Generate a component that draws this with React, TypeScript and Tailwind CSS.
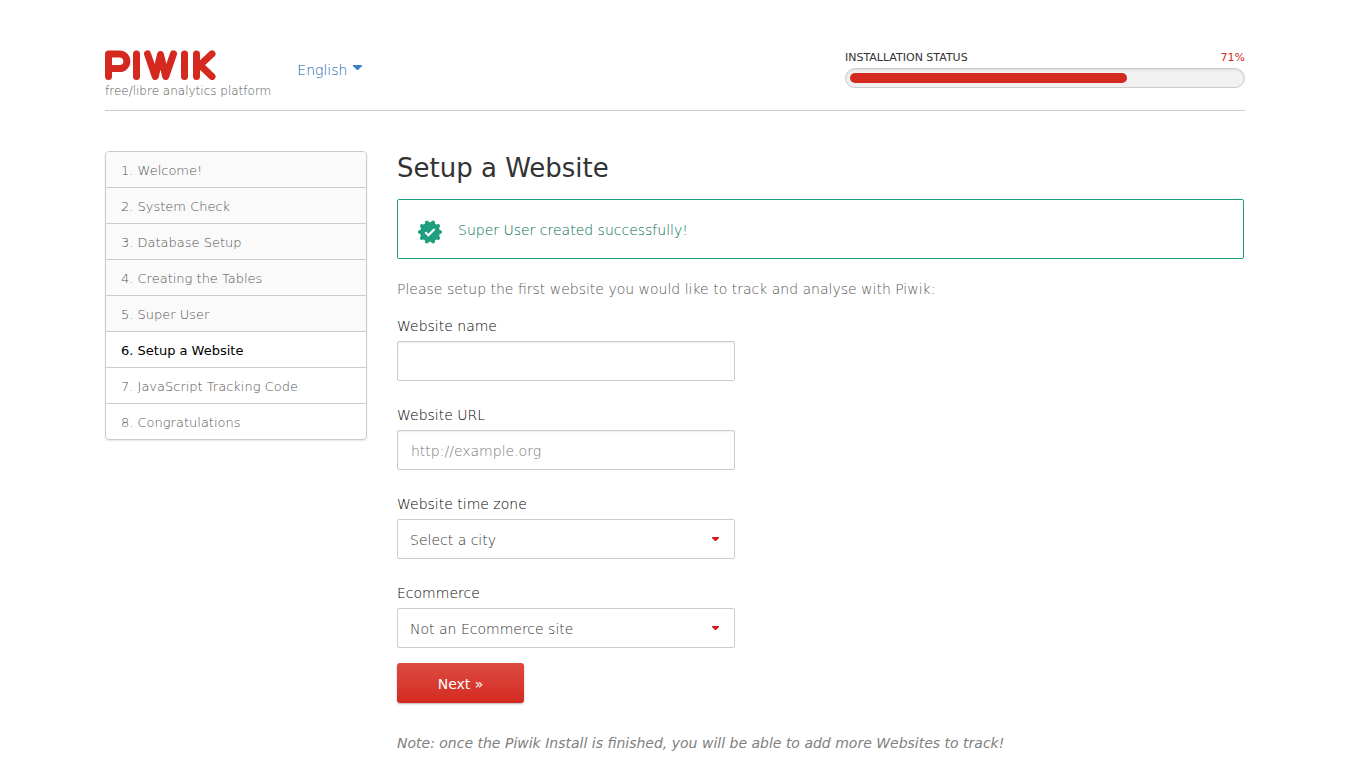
import type { ReactNode } from "react";

const steps = [
  "Welcome!",
  "System Check",
  "Database Setup",
  "Creating the Tables",
  "Super User",
  "Setup a Website",
  "JavaScript Tracking Code",
  "Congratulations",
];
const currentStep = 5;
const progress = 71;

function Logo() {
  return (
    <svg viewBox="0 0 111 30" className="block h-[30px] w-[111px]" role="img" aria-label="Piwik">
      <g fill="none" stroke="#d4291f" strokeWidth="7" strokeLinecap="round" strokeLinejoin="round">
        <path d="M3.5 26.5V3.9H14.5a6.700 6.700 0 0 1 0 14.700H4" />
        <path d="M31.500 3.900V26.500" />
        <path d="M42.500 3.900L50.300 26.500L55.500 4.500L60.700 26.500L68.500 3.900" />
        <path d="M79.500 3.900V26.500" />
        <path d="M91.500 3.900V26.500M107 3.900L95 15L107 26.500" />
      </g>
    </svg>
  );
}

function SuccessBadge() {
  const points = Array.from({ length: 10 }, (_, i) => {
    const a = ((i * 36 - 72) * Math.PI) / 180;
    return [12 + 10 * Math.cos(a), 12 + 10 * Math.sin(a)];
  });
  return (
    <svg viewBox="0 0 24 24" className="block size-6 shrink-0" aria-hidden="true">
      <g fill="#1f9f80">
        <circle cx="12" cy="12" r="10" />
        {points.map(([x, y], i) => (
          <circle key={i} cx={x} cy={y} r="2" />
        ))}
      </g>
      <path d="M7.300 12.200L10.400 15.200L16.600 9" fill="none" stroke="#fff" strokeWidth="2.200" />
    </svg>
  );
}

function Field({ id, label, children }: { id: string; label: string; children: ReactNode }) {
  return (
    <div className="flex flex-col">
      <label htmlFor={id} className="mb-[5px] text-black">{label}</label>
      {children}
    </div>
  );
}

function Select({ id, options }: { id: string; options: string[] }) {
  return (
    <div className="relative">
      <select
        id={id}
        className="block h-10 w-full appearance-none rounded-xs border border-[#ccc] bg-white px-3 pt-[2px] text-[#333]"
      >
        {options.map((o) => (
          <option key={o}>{o}</option>
        ))}
      </select>
      <svg viewBox="0 0 7 4" className="pointer-events-none absolute top-[18px] right-4 h-1 w-[7px]" aria-hidden="true">
        <path d="M0 0H7V1L4 4H3L0 1Z" fill="#d4191f" />
      </svg>
    </div>
  );
}

const inputClass =
  "block h-10 w-full rounded-xs border border-[#ccc] bg-white px-[13px] pt-[2px] text-[#333] shadow-[inset_0_1px_2px_rgba(0,0,0,0.07)] placeholder:text-[#777]";

export default function App() {
  return (
    <div className="mx-auto max-w-[1140px] pt-[50px] font-[Verdana,'DejaVu_Sans',sans-serif] text-[14px] leading-5 font-extralight text-[#555]">
      <header className="flex items-start justify-between border-b border-[#ccc] pb-[7px]">
        <div className="flex gap-[26px]">
          <div>
            <Logo />
            <p className="text-[12px] leading-[23px]">free/libre analytics platform</p>
          </div>
          <button type="button" className="flex h-5 items-center gap-[6px] pt-[20px] text-[#1060b4]">
            English
            <svg viewBox="0 0 9 5" className="mb-[6px] block h-[5px] w-[9px]" aria-hidden="true">
              <path d="M0 0H9V1L5 5H4L0 1Z" fill="#3b7fc4" />
            </svg>
          </button>
        </div>
        <div className="w-[400px]">
          <div className="flex justify-between text-[11px] leading-4 font-normal">
            <span className="text-[#333] uppercase">Installation status</span>
            <span className="text-[#d4291f]">{progress}%</span>
          </div>
          <div
            className="mt-[2px] h-5 rounded-full border border-[#ccc] bg-[#f1f1f1] p-1 shadow-[inset_0_1px_2px_rgba(0,0,0,0.1)]"
            role="progressbar"
            aria-valuenow={progress}
            aria-valuemin={0}
            aria-valuemax={100}
            aria-label="Installation status"
          >
            <div className="h-[10px] rounded-full bg-[#d4291f]" style={{ width: `${progress}%` }} />
          </div>
        </div>
      </header>

      <div className="mt-10 flex items-start gap-[30px]">
        <ol className="w-[262px] shrink-0 divide-y divide-[#ccc] overflow-hidden rounded border border-[#ccc] text-[13px] shadow-[0_1px_2px_rgba(0,0,0,0.1)]">
          {steps.map((step, i) => (
            <li
              key={step}
              aria-current={i === currentStep ? "step" : undefined}
              className={
                "px-[15px] pt-[9px] pb-[7px] leading-[19px] " +
                (i < currentStep ? "bg-[#fafafa]" : i === currentStep ? "font-normal text-black" : "")
              }
            >
              {i + 1}. {step}
            </li>
          ))}
        </ol>

        <main className="min-w-0 grow">
          <h1 className="pt-px text-[26px] leading-8 font-normal text-[#333]">Setup a Website</h1>
          <div
            role="status"
            className="mt-[15px] mr-px flex h-[60px] items-start gap-4 rounded-xs border border-[#1f9f80] px-5 pt-5 text-[#006c50]"
          >
            <SuccessBadge />
            Super User created successfully!
          </div>
          <p className="mt-5">Please setup the first website you would like to track and analyse with Piwik:</p>
          <form className="mt-[17px]" onSubmit={(e) => e.preventDefault()}>
            <div className="flex max-w-[338px] flex-col gap-6">
              <Field id="site-name" label="Website name">
                <input id="site-name" type="text" className={inputClass} />
              </Field>
              <Field id="site-url" label="Website URL">
                <input id="site-url" type="url" placeholder="http://example.org" className={inputClass} />
              </Field>
              <Field id="timezone" label="Website time zone">
                <Select id="timezone" options={["Select a city", "London", "Paris", "New York"]} />
              </Field>
              <Field id="ecommerce" label="Ecommerce">
                <Select id="ecommerce" options={["Not an Ecommerce site", "Ecommerce enabled"]} />
              </Field>
            </div>
            <button
              type="submit"
              className="mt-[15px] block h-10 w-[127px] rounded-[3px] bg-linear-to-b from-[#dc4a42] to-[#d4291f] pt-[2px] font-normal text-white shadow-[0_1px_2px_rgba(0,0,0,0.3)]"
            >
              Next »
            </button>
          </form>
          <p className="mt-[30px] font-normal text-[#808080] italic">
            Note: once the Piwik Install is finished, you will be able to add more Websites to track!
          </p>
        </main>
      </div>
    </div>
  );
}
